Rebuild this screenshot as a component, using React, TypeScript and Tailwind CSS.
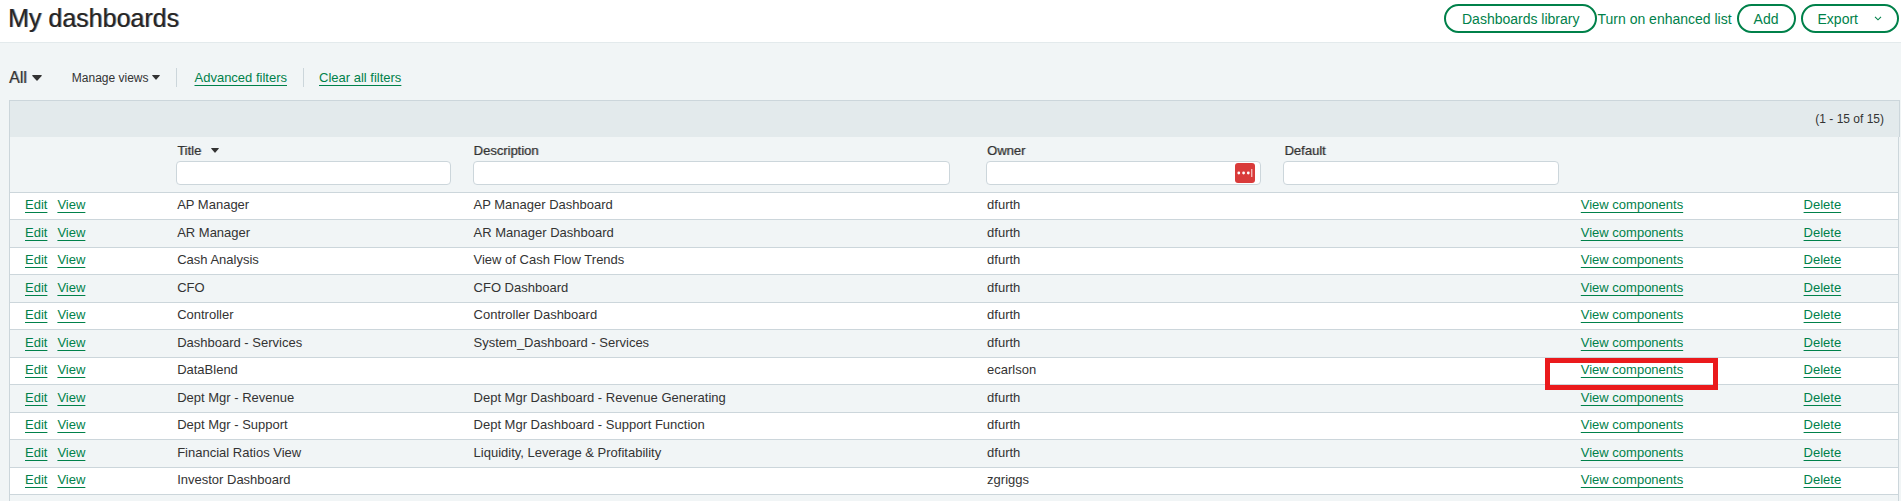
import React from "react";

type Dashboard = {
  title: string;
  description: string;
  owner: string;
  highlighted?: boolean;
};

const dashboards: Dashboard[] = [
  { title: "AP Manager", description: "AP Manager Dashboard", owner: "dfurth" },
  { title: "AR Manager", description: "AR Manager Dashboard", owner: "dfurth" },
  { title: "Cash Analysis", description: "View of Cash Flow Trends", owner: "dfurth" },
  { title: "CFO", description: "CFO Dashboard", owner: "dfurth" },
  { title: "Controller", description: "Controller Dashboard", owner: "dfurth" },
  { title: "Dashboard - Services", description: "System_Dashboard - Services", owner: "dfurth" },
  { title: "DataBlend", description: "", owner: "ecarlson", highlighted: true },
  { title: "Dept Mgr - Revenue", description: "Dept Mgr Dashboard - Revenue Generating", owner: "dfurth" },
  { title: "Dept Mgr - Support", description: "Dept Mgr Dashboard - Support Function", owner: "dfurth" },
  { title: "Financial Ratios View", description: "Liquidity, Leverage & Profitability", owner: "dfurth" },
  { title: "Investor Dashboard", description: "", owner: "zgriggs" },
];

function TextLink({ children }: { children: React.ReactNode }) {
  return (
    <a href="#" className="text-[#00814a] underline underline-offset-3">
      {children}
    </a>
  );
}

function Caret({ className }: { className: string }) {
  return (
    <svg viewBox="0 0 10 6" className={className} aria-hidden="true">
      <path d="M0.6 0h8.8q.6.3.2.9L5.5 5.6q-.5.5-1 0L.4.9Q0 .3.6 0z" fill="currentColor" />
    </svg>
  );
}

const pill =
  "flex h-[29px] items-center rounded-full border-2 border-[#00814a] text-sm text-[#00814a]";

function FilterHeader({
  id,
  label,
  sorted,
  wide,
  autofill,
}: {
  id: string;
  label: string;
  sorted?: boolean;
  wide?: boolean;
  autofill?: boolean;
}) {
  return (
    <th className={wide ? "p-0 pr-9 pt-1 text-left align-top" : "p-0 pr-[22px] pt-1 text-left align-top"}>
      <label
        htmlFor={id}
        className="flex h-5 items-center gap-2.5 pb-px pl-px text-[13px] font-medium [text-shadow:1px_0_#33333360]"
      >
        {label}
        {sorted && <Caret className="h-[5px] w-2" />}
      </label>
      <div className="relative">
        <input
          id={id}
          type="text"
          className="block h-6 w-full rounded-[4px] border border-[#ccd6db] bg-white px-2 text-[13px] font-normal outline-none"
        />
        {autofill && (
          <svg viewBox="0 0 20 20" className="absolute right-1.5 top-0.5 h-5 w-5" aria-hidden="true">
            <rect width="20" height="20" rx="3" fill="#d93b3a" />
            <circle cx="3.8" cy="10" r="1.4" fill="#fff" />
            <circle cx="8.6" cy="10" r="1.4" fill="#fff" />
            <circle cx="13.3" cy="10" r="1.4" fill="#fff" />
            <rect x="16" y="6" width="1.4" height="8" fill="#f3b5b4" />
          </svg>
        )}
      </div>
    </th>
  );
}

export default function App() {
  return (
    <div className="flex min-h-screen flex-col bg-[#f1f5f6] font-['Liberation_Sans',Arial,sans-serif] text-[#333]">
      <header className="flex h-[43px] items-start justify-between border-b border-[#e3eaec] bg-white pl-2 pr-0.5">
        <h1 className="text-[25px] leading-9 font-medium text-[#262626] [text-shadow:1px_0_#26262680]">
          My dashboards
        </h1>
        <div className="flex items-center pt-1">
          <button type="button" className={`${pill} px-4`}>Dashboards library</button>
          <a href="#" className="text-sm text-[#00814a]">Turn on enhanced list</a>
          <button type="button" className={`${pill} ml-[5px] px-[15px]`}>Add</button>
          <button type="button" className={`${pill} ml-[5px] gap-4 px-[15px]`}>
            Export
            <svg viewBox="0 0 8 5" className="h-[5px] w-2" fill="none" stroke="currentColor" aria-hidden="true">
              <path d="M1 .8l3 3 3-3" strokeWidth="1.1" />
            </svg>
          </button>
        </div>
      </header>

      <nav className="flex h-[57px] items-center pl-[9px] pt-3 text-[13px]">
        <button
          type="button"
          className="flex items-center gap-[5px] text-base font-medium [text-shadow:1px_0_#33333360]"
        >
          All
          <Caret className="h-[6px] w-2.5" />
        </button>
        <button type="button" className="ml-[30px] flex items-center gap-[3px] text-xs">
          Manage views
          <Caret className="h-[5px] w-2" />
        </button>
        <div className="ml-4 border-l border-[#ccd6db] pl-[18px]">
          <TextLink>Advanced filters</TextLink>
        </div>
        <div className="ml-4 border-l border-[#ccd6db] pl-[15px]">
          <TextLink>Clear all filters</TextLink>
        </div>
      </nav>

      <main className="flex flex-1 flex-col pl-[9px]">
        <div className="mr-px flex h-[37px] items-center justify-end border border-b-0 border-[#ccd6db] bg-[#e3eaec] pr-[15px] text-xs">
          (1 - 15 of 15)
        </div>
        <div className="mr-0.5 flex flex-1 flex-col border-x border-[#ccd6db]">
          <table className="w-full table-fixed border-separate border-spacing-0 text-[13px] leading-5">
            <colgroup>
              <col className="w-[8.8%]" />
              <col className="w-[15.7%]" />
              <col className="w-[27.2%]" />
              <col className="w-[15.75%]" />
              <col className="w-[15.75%]" />
              <col className="w-[11.8%]" />
              <col />
            </colgroup>
            <thead>
              <tr className="h-14 [&>*]:border-b [&>*]:border-[#ccd6db]">
                <td />
                <FilterHeader id="title" label="Title" sorted />
                <FilterHeader id="description" label="Description" wide />
                <FilterHeader id="owner" label="Owner" autofill />
                <FilterHeader id="default" label="Default" />
                <td />
                <td />
              </tr>
            </thead>
            <tbody>
              {dashboards.map((d) => (
                <tr
                  key={d.title}
                  className="h-[27px] bg-white even:h-[28px] even:bg-[#f1f5f6] [&>td]:border-b [&>td]:border-[#ccd6db] [&>td]:p-0 [&>td]:pb-0.5"
                >
                  <td>
                    <div className="flex gap-2.5 pl-[15px]">
                      <TextLink>Edit</TextLink>
                      <TextLink>View</TextLink>
                    </div>
                  </td>
                  <td><div className="pl-px">{d.title}</div></td>
                  <td><div className="pl-px">{d.description}</div></td>
                  <td><div className="pl-px">{d.owner}</div></td>
                  <td />
                  <td className="relative">
                    {d.highlighted && (
                      <span className="pointer-events-none absolute -left-9 top-0 h-8 w-[173px] border-5 border-[#ea1a1c]" />
                    )}
                    <TextLink>View components</TextLink>
                  </td>
                  <td>
                    <TextLink>Delete</TextLink>
                  </td>
                </tr>
              ))}
            </tbody>
          </table>
        </div>
      </main>
    </div>
  );
}
